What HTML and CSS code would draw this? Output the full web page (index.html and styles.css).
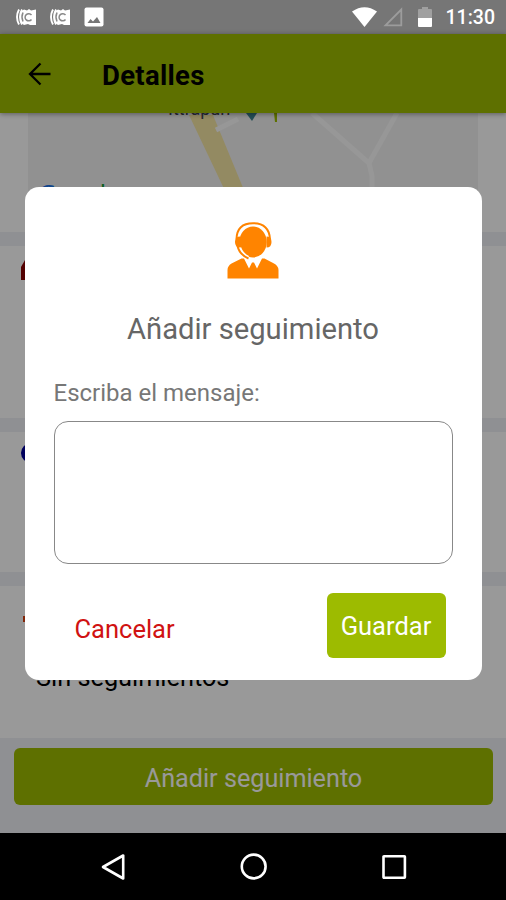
FILE: index.html
```html
<!DOCTYPE html>
<html lang="es">
<head>
  <meta charset="UTF-8">
  <title>Detalles</title>
  <link rel="stylesheet" href="styles.css">
</head>
<body>
  <div class="status-bar">
    <div class="status-left">
      <svg class="cast" width="21" height="18" viewBox="0 0 21 18">
        <path d="M8 1.500l3 1 2-1.500 2 1.500 5-1v15.500h-6l-2-1-4 1-4-3V4z" fill="#fff"/>
        <path d="M3 1.500Q-1 9 3 16.500M6 1.500Q2 9 6 16.500" fill="none" stroke="#fff" stroke-width="1.900"/>
        <path d="M7 4.500Q5 9 7 13.500M15.500 7A3.600 3.600 0 1 0 15.500 11.500" fill="none" stroke="#888" stroke-width="1.500"/>
      </svg>
      <svg class="cast" width="21" height="18" viewBox="0 0 21 18">
        <path d="M8 1.500l3 1 2-1.500 2 1.500 5-1v15.500h-6l-2-1-4 1-4-3V4z" fill="#fff"/>
        <path d="M3 1.500Q-1 9 3 16.500M6 1.500Q2 9 6 16.500" fill="none" stroke="#fff" stroke-width="1.900"/>
        <path d="M7 4.500Q5 9 7 13.500M15.500 7A3.600 3.600 0 1 0 15.500 11.500" fill="none" stroke="#888" stroke-width="1.500"/>
      </svg>
      <svg width="20" height="20" viewBox="0 0 20 20">
        <rect x="0.500" y="0.500" width="19" height="19" rx="2" fill="#fff"/>
        <path d="M3.500 16l3-4 2.500 2.500 4-4.500 3.500 6z" fill="#767676"/>
      </svg>
    </div>
    <div class="status-right">
      <svg class="wifi" width="25" height="20" viewBox="0 0 25 20">
        <path d="M0 4.500Q12.500-4 25 4.500L12.500 20z" fill="#fff"/>
      </svg>
      <svg class="signal" width="20" height="20" viewBox="0 0 20 20">
        <path d="M18.300 2.500v15.800H2.500z" fill="none" stroke="#9c9c9c" stroke-width="1.800"/>
      </svg>
      <svg class="battery" width="14" height="20" viewBox="0 0 14 20">
        <path d="M0 11V3q0-1 1-1h3V0h6v2h3q1 0 1 1v8z" fill="#a0a0a0"/>
        <path d="M0 11h14v8q0 1-1 1H1q-1 0-1-1z" fill="#fff"/>
      </svg>
      <span class="clock">11:30</span>
    </div>
  </div>

  <div class="app">
    <header class="toolbar">
      <svg width="24" height="24" viewBox="0 0 24 24">
        <path d="M23.500 12H3M13.500 1.500L3 12l10.500 10.500" fill="none" stroke="#000" stroke-width="2.300"/>
      </svg>
      <h1>Detalles</h1>
    </header>

    <main class="cards">
      <section class="card card-map">
        <svg class="map" width="450" height="119" viewBox="0 0 450 119">
          <rect width="450" height="119" fill="#f2f2f2"/>
          <path d="M161 2h24l33 80h-19z" fill="#f6e6a3"/>
          <path d="M188 17l22-11M284 0l57 50 3 13v51M341 50l28-50" fill="none" stroke="#fcfcfc" stroke-width="5"/>
          <path d="M218 0h11l-5 8z" fill="#3d8291"/>
          <path d="M246 0h3v9h-2z" fill="#9dbb00"/>
          <text class="map-place" x="140" y="2">Ittrapurr</text>
          <text class="google" x="10" y="90"><tspan fill="#1a73e8">G</tspan><tspan fill="#ea4335">o</tspan><tspan fill="#fbbc04">o</tspan><tspan fill="#1a73e8">g</tspan><tspan fill="#0a9d2c">l</tspan><tspan fill="#ea4335">e</tspan></text>
        </svg>
      </section>
      <section class="card card-place">
        <svg width="24" height="22" viewBox="0 0 24 22"><path d="M0 22V9L4 2L12 0l12 9v13z" fill="#8b0000"/></svg>
      </section>
      <section class="card card-info">
        <svg width="20" height="20" viewBox="0 0 20 20"><circle cx="10" cy="10" r="10" fill="#00009c"/></svg>
      </section>
      <section class="card card-tracking">
        <svg width="20" height="8" viewBox="0 0 20 8"><rect width="20" height="6" fill="#d9400f"/></svg>
        <p>Sin seguimientos</p>
      </section>
    </main>

    <footer class="actions">
      <button class="btn-add">Añadir seguimiento</button>
    </footer>

    <div class="overlay">
      <div class="modal">
        <svg class="agent" width="52" height="58" viewBox="0 0 52 58">
          <g fill="#ff8400">
            <path d="M0.500 56.500V48q0-4 4-6.500l10-5h2.500l5 10 3-6h2l3 6 5-10h2.500l9.500 5q4.500 2.500 4.500 6.500v8.500z"/>
            <ellipse cx="26" cy="20" rx="13.700" ry="15.500"/>
          </g>
          <path d="M12 26q2.500 7 9 10" fill="none" stroke="#fff" stroke-width="4.500"/>
          <path d="M9.500 17Q10 1.200 26 1.200T43 17M10.500 24q2 8.500 11 12.500" fill="none" stroke="#ff8400" stroke-width="2"/>
          <path d="M13 14.500v11q-5 0-5-5.500t5-5.500zM39.500 14.500v11q5 0 5-5.500t-5-5.500z" fill="#ff8400"/>
        </svg>
        <h2>Añadir seguimiento</h2>
        <label for="mensaje">Escriba el mensaje:</label>
        <textarea id="mensaje"></textarea>
        <div class="modal-actions">
          <button class="btn-cancel">Cancelar</button>
          <button class="btn-save">Guardar</button>
        </div>
      </div>
    </div>
  </div>

  <nav class="nav-bar">
    <svg width="28" height="28" viewBox="0 0 28 28"><path d="M24.200 2.500v23L4 14z" fill="none" stroke="#fff" stroke-width="2.600" stroke-linejoin="round"/></svg>
    <svg width="28" height="28" viewBox="0 0 28 28"><circle cx="13.700" cy="13.500" r="11.900" fill="none" stroke="#fff" stroke-width="2.600"/></svg>
    <svg width="28" height="28" viewBox="0 0 28 28"><rect x="3.500" y="3.300" width="21.400" height="21.400" rx="0.500" fill="none" stroke="#fff" stroke-width="2.600"/></svg>
  </nav>
</body>
</html>
```
FILE: styles.css
```css
* {
  box-sizing: border-box;
}
body {
  margin: 0;
  width: 506px;
  height: 900px;
  display: flex;
  flex-direction: column;
  overflow: hidden;
  font-family: Roboto, sans-serif;
  background: #000;
}
svg {
  display: block;
  flex-shrink: 0;
}
h1, h2, p {
  margin: 0;
}
button {
  border: none;
  padding: 0;
  font-family: inherit;
}

/* status bar */
.status-bar {
  height: 34px;
  display: flex;
  justify-content: space-between;
  align-items: center;
  padding: 0 11px 0 16px;
  background: #767676;
}
.status-left, .status-right {
  display: flex;
  align-items: center;
}
.cast {
  margin-right: 13px;
}
.wifi {
  margin-right: 6px;
}
.signal {
  margin-right: 15px;
}
.battery {
  margin-right: 14px;
}
.clock {
  color: #fff;
  font-size: 19.5px;
  font-weight: 500;
  line-height: 34px;
  padding-top: 2px;
}

/* screen */
.app {
  position: relative;
  height: 799px;
  display: flex;
  flex-direction: column;
  background: #eff1f6;
}
.toolbar {
  position: relative;
  height: 79px;
  flex-shrink: 0;
  display: flex;
  align-items: center;
  gap: 51px;
  padding-left: 27px;
  background: #9dbb00;
  box-shadow: 0 1px 5px rgba(0,0,0,0.4);
}
.toolbar h1 {
  font-size: 27.5px;
  font-weight: 700;
  letter-spacing: 0.3px;
  padding-top: 3px;
}
.cards {
  display: flex;
  flex-direction: column;
  gap: 14px;
}
.card {
  background: #fff;
}
.card-map {
  height: 119px;
  padding-left: 28px;
}
.map {
  overflow: visible;
}
.map-place {
  font-size: 18px;
  fill: #445;
}
.google {
  font-size: 25px;
  font-family: "Open Sans", sans-serif;
}
.card-place {
  height: 172px;
  padding: 12px 21px;
}
.card-info {
  height: 140px;
  padding: 11px 21px;
}
.card-tracking {
  height: 152px;
  padding: 30px 23px;
}
.card-tracking p {
  margin: 38px 0 0 13px;
  font-size: 25.3px;
  line-height: 32px;
}
.actions {
  padding: 10px 13px 0 14px;
}
.btn-add {
  width: 100%;
  height: 57px;
  border-radius: 6px;
  background: #9dbb00;
  color: #fff;
  font-size: 25.2px;
  padding-top: 3px;
}

/* dialog */
.overlay {
  position: absolute;
  inset: 0;
  background: rgba(0,0,0,0.4);
  display: flex;
  justify-content: center;
  align-items: center;
}
.modal {
  width: 457px;
  height: 493px;
  display: flex;
  flex-direction: column;
  padding: 35px 29px 0;
  border-radius: 14px;
  background: #fff;
}
.agent {
  align-self: center;
}
.modal h2 {
  margin-top: 29px;
  text-align: center;
  font-size: 29.2px;
  font-weight: 400;
  line-height: 40px;
  color: #666;
}
.modal label {
  margin-top: 28px;
  font-size: 24px;
  line-height: 32px;
  color: #777;
}
.modal textarea {
  margin-top: 12px;
  height: 143px;
  border: 1px solid #888;
  border-radius: 14px;
  background: #fff;
  resize: none;
}
.modal-actions {
  display: flex;
  justify-content: space-between;
  margin-top: 29px;
  padding: 0 7px 0 21px;
}
.btn-cancel {
  height: 71px;
  background: none;
  color: #d01212;
  font-size: 25.5px;
}
.btn-save {
  width: 119px;
  height: 65px;
  border-radius: 6px;
  background: #9dbb00;
  color: #fff;
  font-size: 25.5px;
}

/* android navigation */
.nav-bar {
  height: 67px;
  display: flex;
  justify-content: space-between;
  align-items: center;
  padding: 0 98px 0 99px;
  background: #000;
}
```
